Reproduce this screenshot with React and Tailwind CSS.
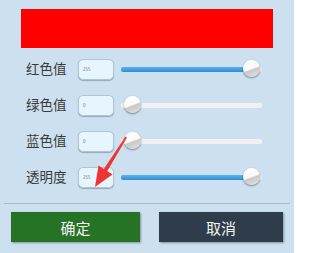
import React from "react";

const rows = [
  { label: "红色值", value: 255 },
  { label: "绿色值", value: 0 },
  { label: "蓝色值", value: 0 },
  { label: "透明度", value: 255 },
];

function Slider({ value }) {
  const pct = value / 255;
  const thumbLeft = 3 + pct * 119;
  return (
    <div className="relative w-[141px] h-[18px] flex items-center">
      <div className="w-full h-[5px] rounded-[2px] bg-[#f3f0f4] overflow-hidden flex">
        <div
          className="h-full bg-[linear-gradient(#5cb3ea,#2e8fd4)]"
          style={{ width: value > 0 ? thumbLeft + 8 : 0 }}
        />
      </div>
      <div
        className="absolute top-[0px] w-[17px] h-[17px] rounded-full bg-[linear-gradient(160deg,#ffffff_0%,#fafafa_50%,#c8c8c8_57%,#e4e4e4_100%)] shadow-[0_1px_2px_rgba(0,0,0,0.45)]"
        style={{ left: thumbLeft }}
      />
    </div>
  );
}

export default function App() {
  return (
    <div
      className="relative w-[294px] h-[253px] bg-[#cce0ef] overflow-hidden"
      style={{ fontFamily: '"Noto Sans CJK SC", "Noto Sans", sans-serif' }}
    >
      <div className="ml-[21px] mt-[9px] w-[252px] h-[39px] bg-[#ff0000]" />
      <div className="mt-[3px] flex flex-col">
        {rows.map((r) => (
          <div key={r.label} className="h-[36px] flex items-center">
            <div className="ml-[26px] w-[52px] text-[13.5px] leading-none text-[#3a3a3a]">
              {r.label}
            </div>
            <div className="w-[36px] h-[21px] rounded-[5px] bg-[#e7f5fe] border border-[#abc6d8] shadow-[0_1px_1px_rgba(0,0,0,0.25)] flex items-center pl-[4px] text-[4.5px] leading-none text-[#777]">
              {r.value}
            </div>
            <div className="ml-[7px]">
              <Slider value={r.value} />
            </div>
          </div>
        ))}
      </div>
      <div className="mt-[8px] mx-[4px] h-px bg-[#9fbdd3]" />
      <div className="mt-[8px] flex">
        <button className="ml-[11px] w-[129px] h-[30px] bg-[#267326] text-[#f4f4f4] text-[15px] leading-none shadow-[1px_1px_2px_rgba(0,0,0,0.35)]">
          确定
        </button>
        <button className="ml-[19px] w-[124px] h-[30px] bg-[#2e3d49] text-[#f4f4f4] text-[15px] leading-none shadow-[1px_1px_2px_rgba(0,0,0,0.35)]">
          取消
        </button>
      </div>
      <svg
        className="absolute left-0 top-0 pointer-events-none"
        width="294"
        height="253"
        viewBox="0 0 294 253"
      >
        <polygon
          points="125.5,136.5 127,137.5 107,171.5 103.5,169.5"
          fill="#ee3535"
        />
        <polygon points="95,187 98.5,165.5 112.5,174.5" fill="#ee3535" />
      </svg>
    </div>
  );
}
